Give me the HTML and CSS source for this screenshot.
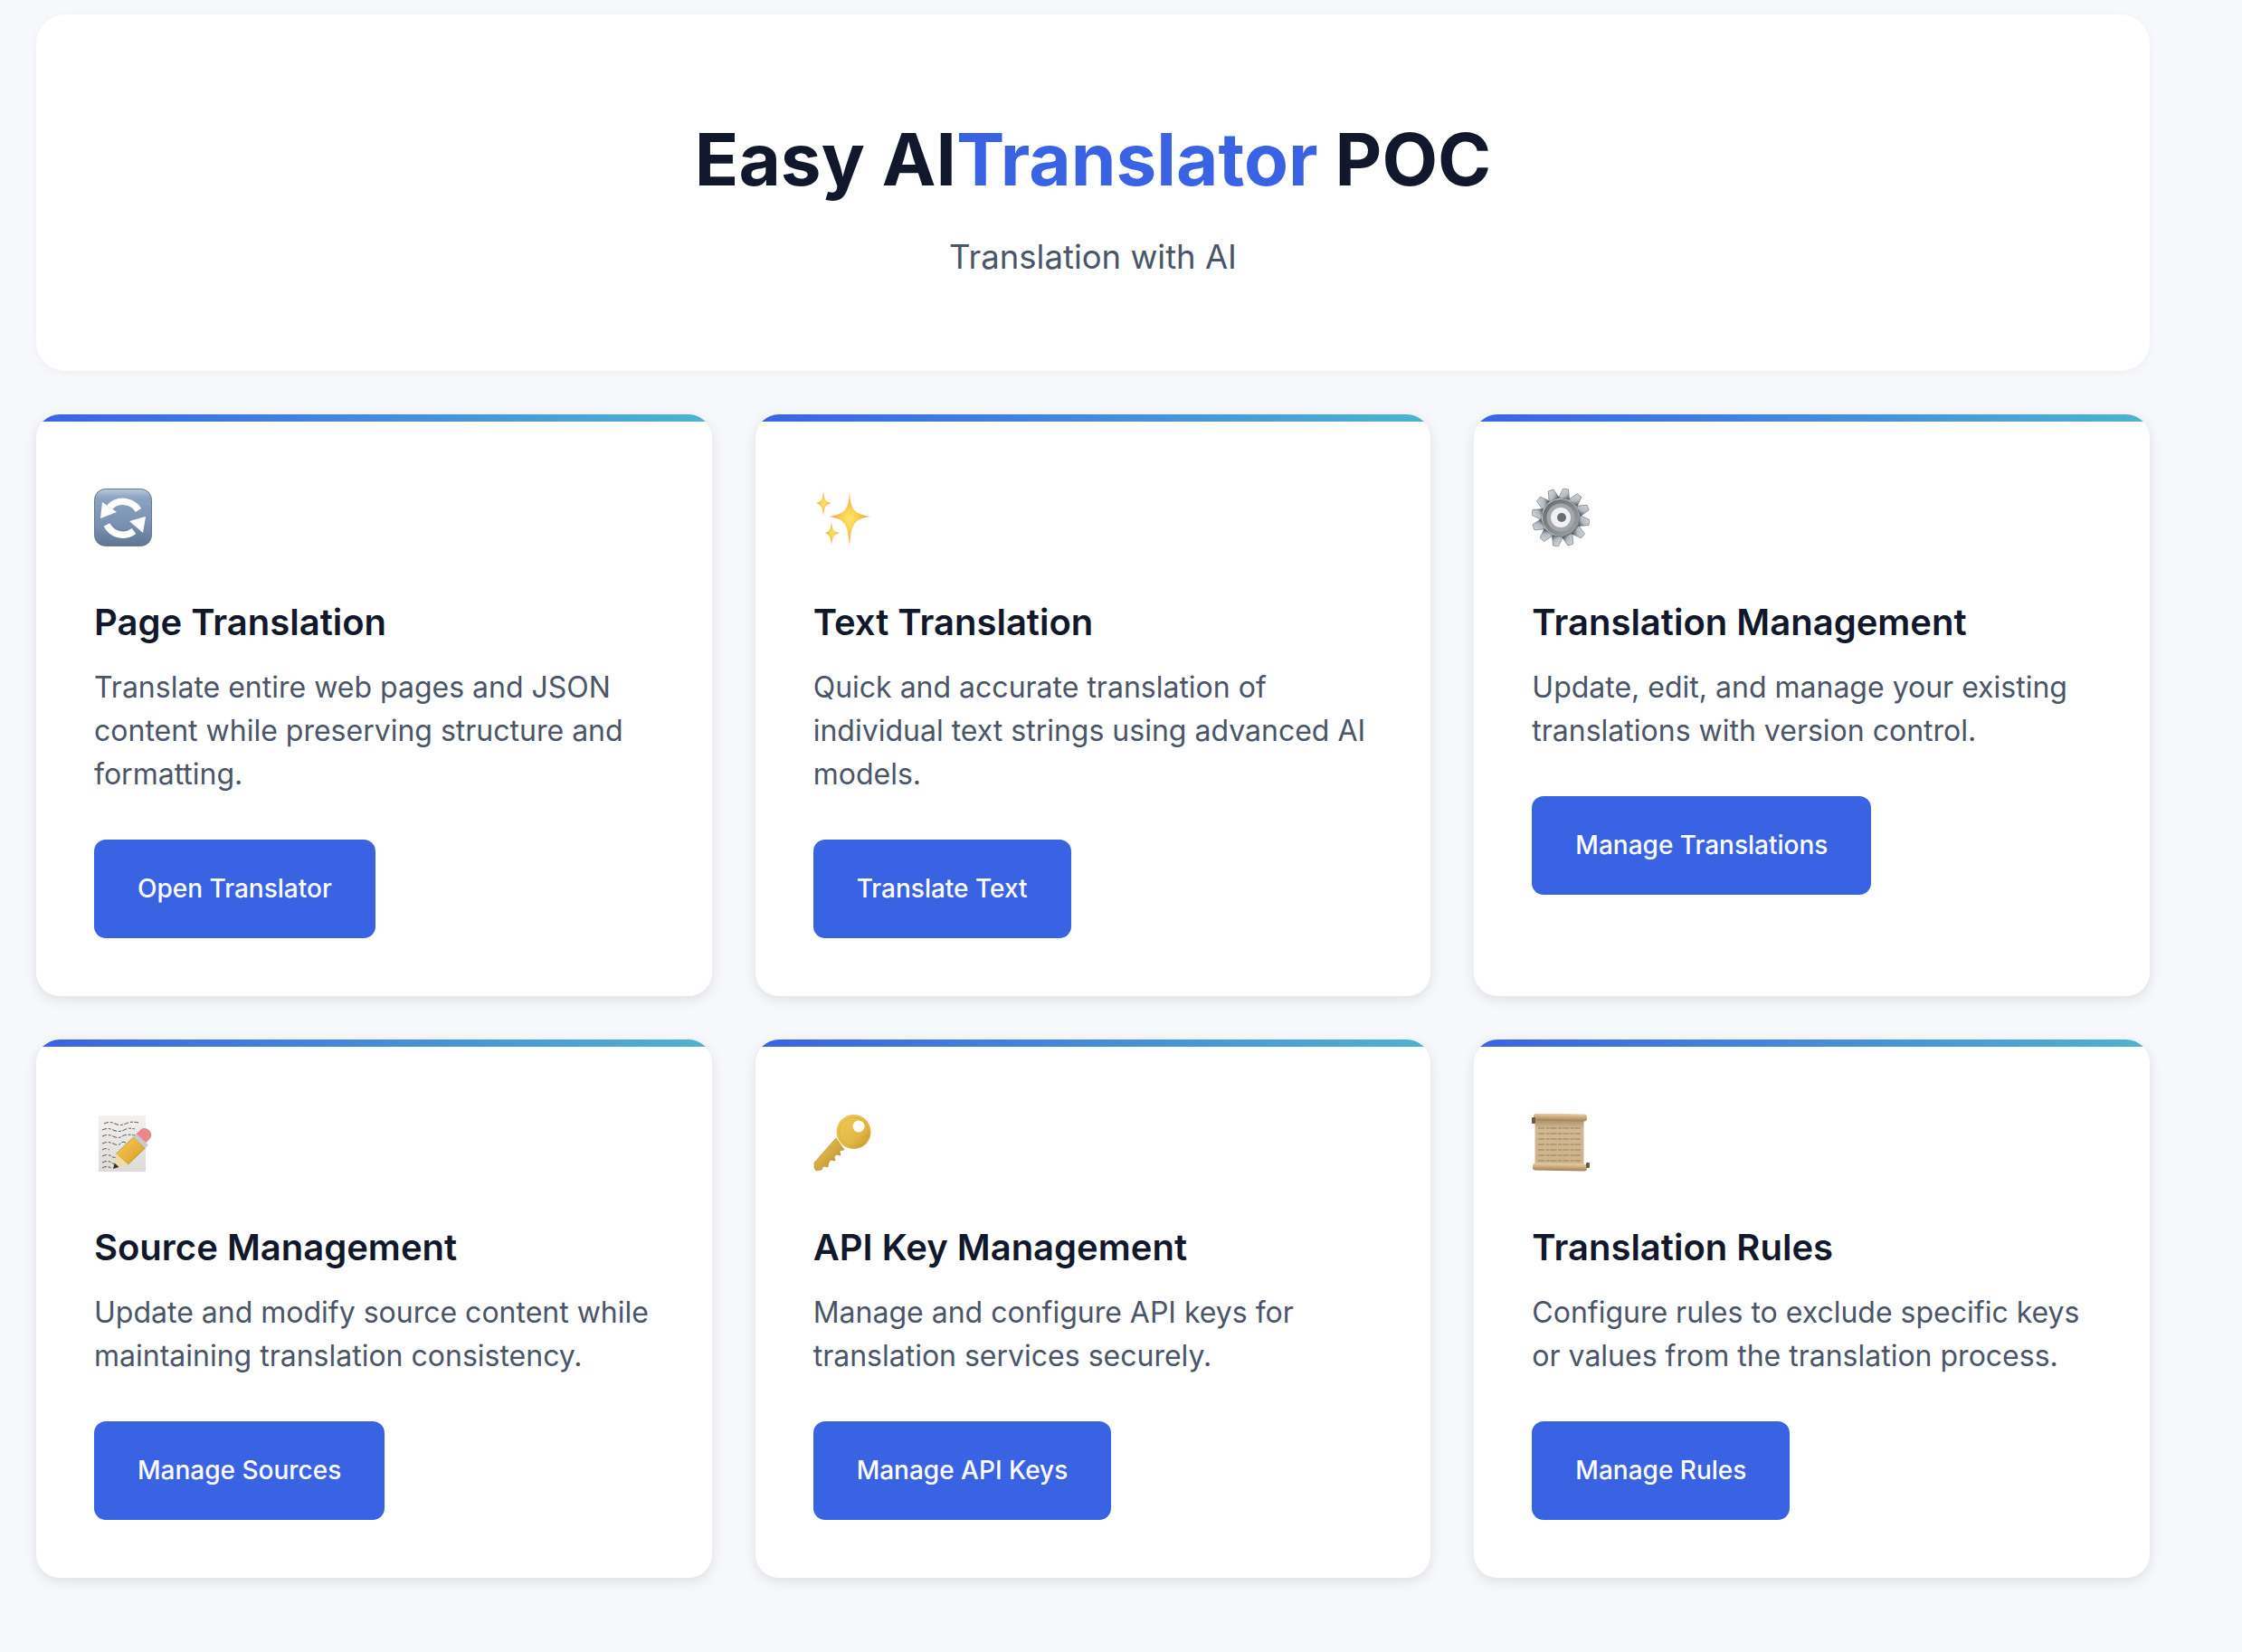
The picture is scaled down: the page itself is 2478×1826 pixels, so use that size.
FILE: index.html
```html
<!DOCTYPE html>
<html lang="en">
<head>
<meta charset="utf-8">
<title>Easy AITranslator POC</title>
<link rel="stylesheet" href="styles.css">
</head>
<body>
<svg class="defs" width="0" height="0" aria-hidden="true">
  <defs>
    <linearGradient id="gBlue" x1="0" y1="0" x2="0" y2="1"><stop offset="0" stop-color="#b9c9da"/><stop offset=".16" stop-color="#8aa3c1"/><stop offset=".65" stop-color="#7890ae"/><stop offset="1" stop-color="#5f7690"/></linearGradient>
    <radialGradient id="gStar" cx=".5" cy=".5" r=".5"><stop offset="0" stop-color="#fbe46e"/><stop offset=".35" stop-color="#f9d352"/><stop offset="1" stop-color="#ec983a"/></radialGradient>
    <linearGradient id="gGear" x1="0" y1="0" x2="1" y2="1"><stop offset="0" stop-color="#d6dde3"/><stop offset=".62" stop-color="#b2bac1"/><stop offset="1" stop-color="#45494e"/></linearGradient>
    <linearGradient id="gRing" x1="0" y1="0" x2="1" y2="1"><stop offset="0" stop-color="#63686d"/><stop offset="1" stop-color="#9fa4a8"/></linearGradient>
    <linearGradient id="gKey" x1="0" y1="0" x2="1" y2="1"><stop offset="0" stop-color="#f0cc58"/><stop offset=".6" stop-color="#e3b845"/><stop offset="1" stop-color="#c4962b"/></linearGradient>
    <linearGradient id="gShaft" x1="0" y1="0" x2="1" y2="1"><stop offset="0" stop-color="#eccb5c"/><stop offset="1" stop-color="#b98a24"/></linearGradient>
    <linearGradient id="gPaper" x1="0" y1="0" x2="0" y2="1"><stop offset="0" stop-color="#f2f1ee"/><stop offset="1" stop-color="#dcdbd7"/></linearGradient>
    <linearGradient id="gPencil" x1="0" y1="0" x2="1" y2="1"><stop offset="0" stop-color="#f6cf55"/><stop offset="1" stop-color="#d99a28"/></linearGradient>
    <linearGradient id="gRoll" x1="0" y1="0" x2="0" y2="1"><stop offset="0" stop-color="#e6cfa6"/><stop offset=".5" stop-color="#c9a97c"/><stop offset="1" stop-color="#a08058"/></linearGradient>
    <linearGradient id="gScroll" x1="0" y1="0" x2="0" y2="1"><stop offset="0" stop-color="#a98c68"/><stop offset=".2" stop-color="#d0b994"/><stop offset="1" stop-color="#cdb38b"/></linearGradient>
  </defs>
</svg>
<main class="page">
  <header class="hero">
    <h1 class="hero-title">Easy AI<span class="accent">Translator</span> POC</h1>
    <p class="hero-sub">Translation with AI</p>
  </header>
  <section class="grid">
    <article class="card">
      <svg class="icon" viewBox="0 0 64 64">
        <rect x="0.5" y="0.5" width="63" height="63" rx="12" fill="url(#gBlue)" stroke="#64788f"/>
        <path d="M17 21 A20 20 0 0 1 49 24" fill="none" stroke="#fff" stroke-width="7.5"/>
        <path d="M7 33 L9 15 L25 26 Z" fill="#fff"/>
        <path d="M14 40 A20 20 0 0 0 44 47" fill="none" stroke="#fff" stroke-width="7.5"/>
        <path d="M57 31 L54 49 L39 36 Z" fill="#fff"/>
      </svg>
      <h2 class="card-title">Page Translation</h2>
      <p class="card-text">Translate entire web pages and JSON content while preserving structure and formatting.</p>
      <a class="btn">Open Translator</a>
    </article>
    <article class="card">
      <svg class="icon" viewBox="0 0 64 64">
        <path d="M40 4 C41 22 44 28 63 31 C44 34 42 40 40 63 C38 40 36 34 17 31 C36 28 39 22 40 4 Z" fill="url(#gStar)"/>
        <path d="M11 3 C12 12 13 15 20 16 C13 18 12 21 11 30 C10 21 9 18 3 16 C9 15 10 12 11 3 Z" fill="url(#gStar)"/>
        <path d="M20 37 C21 45 22 48 29 49 C22 51 21 54 20 62 C19 54 18 51 13 49 C18 48 19 45 20 37 Z" fill="url(#gStar)"/>
      </svg>
      <h2 class="card-title">Text Translation</h2>
      <p class="card-text">Quick and accurate translation of individual text strings using advanced AI models.</p>
      <a class="btn">Translate Text</a>
    </article>
    <article class="card">
      <svg class="icon" viewBox="0 0 64 64">
        <g fill="url(#gGear)" stroke="#55595e" stroke-width=".5">
          <circle cx="32" cy="32" r="23"/>
          <path d="M29 0 L35 0 L38 11 L26 11 Z" transform="rotate(10 32 32)"/>
          <path d="M29 0 L35 0 L38 11 L26 11 Z" transform="rotate(40 32 32)"/>
          <path d="M29 0 L35 0 L38 11 L26 11 Z" transform="rotate(70 32 32)"/>
          <path d="M29 0 L35 0 L38 11 L26 11 Z" transform="rotate(100 32 32)"/>
          <path d="M29 0 L35 0 L38 11 L26 11 Z" transform="rotate(130 32 32)"/>
          <path d="M29 0 L35 0 L38 11 L26 11 Z" transform="rotate(160 32 32)"/>
          <path d="M29 0 L35 0 L38 11 L26 11 Z" transform="rotate(190 32 32)"/>
          <path d="M29 0 L35 0 L38 11 L26 11 Z" transform="rotate(220 32 32)"/>
          <path d="M29 0 L35 0 L38 11 L26 11 Z" transform="rotate(250 32 32)"/>
          <path d="M29 0 L35 0 L38 11 L26 11 Z" transform="rotate(280 32 32)"/>
          <path d="M29 0 L35 0 L38 11 L26 11 Z" transform="rotate(310 32 32)"/>
          <path d="M29 0 L35 0 L38 11 L26 11 Z" transform="rotate(340 32 32)"/>
        </g>
        <circle cx="32" cy="32" r="20" fill="url(#gRing)"/>
        <circle cx="32" cy="32" r="15.5" fill="#a3a7ab"/>
        <circle cx="32" cy="32" r="11" fill="#f0f1f3"/>
        <circle cx="33" cy="32" r="5" fill="#6a6e72"/>
      </svg>
      <h2 class="card-title">Translation Management</h2>
      <p class="card-text">Update, edit, and manage your existing translations with version control.</p>
      <a class="btn">Manage Translations</a>
    </article>
    <article class="card">
      <svg class="icon" viewBox="0 0 64 64">
        <rect x="5" y="2" width="52" height="62" fill="url(#gPaper)"/>
        <g fill="none" stroke="#55554f" stroke-width="1" stroke-dasharray="5 2 3 1.5">
          <path d="M11 11 q6 -3 12 0 t12 0 t14 -1"/>
          <path d="M9 18 q6 -3 12 0 t12 0 t12 -1"/>
          <path d="M9 25 q6 -3 12 0 t10 0 t14 -1"/>
          <path d="M9 33 q6 -3 12 0 t8 0 t6 -1"/>
          <path d="M9 40 q4 -3 8 0"/>
          <path d="M9 47 q6 -3 10 0 t8 0"/>
          <path d="M9 54 q6 -3 10 0 t6 0"/>
          <path d="M9 60 q4 -3 10 0"/>
        </g>
        <path d="M24.5 44 L43.5 26 L56.5 38 L37.5 56 Z" fill="url(#gPencil)" stroke="#a87a1e" stroke-width=".6"/>
        <path d="M24.5 44 L37.5 56 L21 61 Z" fill="#f3d9a8"/>
        <path d="M21 61 L22.6 54.5 L27.5 59 Z" fill="#333"/>
        <path d="M45 24 L51 18 C54 15 58 15.5 61 18.5 C64 21.5 64 25 61.5 28 L55 34 Z" fill="#e9888a"/>
        <path d="M43.5 26 L47 22.6 L60 34.6 L56.5 38 Z" fill="#c9c9c9"/>
      </svg>
      <h2 class="card-title">Source Management</h2>
      <p class="card-text">Update and modify source content while maintaining translation consistency.</p>
      <a class="btn">Manage Sources</a>
    </article>
    <article class="card">
      <svg class="icon" viewBox="0 0 64 64">
        <path d="M1 54 L25 27 L34 40 L29 41 L30 46 L25 45 L23 48 L24 52 L19 51 L17 54 L16 59 L11 58 L9 62 L3 63 L1 60 Z" fill="url(#gShaft)" stroke="#a97f25" stroke-width=".5"/>
        <circle cx="44.5" cy="20" r="19" fill="url(#gKey)"/>
        <circle cx="44.5" cy="20" r="16" fill="none" stroke="#c99f35" stroke-width=".8" opacity=".6"/>
        <circle cx="50" cy="14" r="6.5" fill="#fff"/>
      </svg>
      <h2 class="card-title">API Key Management</h2>
      <p class="card-text">Manage and configure API keys for translation services securely.</p>
      <a class="btn">Manage API Keys</a>
    </article>
    <article class="card">
      <svg class="icon" viewBox="0 0 64 64">
        <rect x="3.5" y="6" width="54" height="52" fill="url(#gScroll)"/>
        <g fill="none" stroke="#ae9169" stroke-width="1.3" stroke-dasharray="7 1.5 4 1">
          <path d="M7 16 H54"/><path d="M7 22 H54"/><path d="M7 28 H54"/><path d="M7 34 H54"/><path d="M7 40 H54"/><path d="M7 46 H54"/><path d="M7 52 H54"/>
        </g>
        <rect x="2" y="0" width="59" height="8" rx="3" fill="url(#gRoll)" transform="rotate(1 32 4)"/>
        <rect x="0" y="4" width="4" height="7" rx="1" fill="#6b5a45"/>
        <rect x="1" y="55" width="60" height="8" rx="3" fill="url(#gRoll)" transform="rotate(1 32 60)"/>
        <rect x="60" y="54" width="4" height="6" rx="1" fill="#6b5a45"/>
      </svg>
      <h2 class="card-title">Translation Rules</h2>
      <p class="card-text">Configure rules to exclude specific keys or values from the translation process.</p>
      <a class="btn">Manage Rules</a>
    </article>
  </section>
</main>
</body>
</html>
```

FILE: styles.css
```css
* { box-sizing: border-box; }
html, body { margin: 0; padding: 0; }
body {
  background: #f7f8fb;
  font-family: Inter, "Noto Sans", sans-serif;
  color: #12182b;
  min-height: 1826px;
}
.defs { display: block; height: 0; }
.page {
  width: 2336px;
  margin-left: 40px;
  padding-top: 16px;
}
.hero {
  height: 394px;
  background: #fff;
  border-radius: 32px;
  box-shadow: 0 2px 10px rgba(20, 30, 60, .04);
  padding-top: 112px;
  text-align: center;
  margin-bottom: 48px;
}
.hero-title {
  margin: 0;
  font-size: 80px;
  line-height: 96px;
  font-weight: 700;
  color: #12182b;
}
.accent { color: #3a63e4; }
.hero-sub {
  margin: 33px 0 0;
  font-size: 36.5px;
  line-height: 55px;
  color: #4a5568;
}
.grid {
  display: grid;
  grid-template-columns: repeat(3, 1fr);
  gap: 48px;
}
.card {
  position: relative;
  background: #fff;
  border-radius: 26px;
  overflow: hidden;
  padding: 82px 64px 64px;
  box-shadow: 0 4px 14px rgba(0, 0, 0, .1);
  display: flex;
  flex-direction: column;
  align-items: flex-start;
}
.card::before {
  content: "";
  position: absolute;
  left: 0;
  top: 0;
  width: 100%;
  height: 8px;
  background: linear-gradient(90deg, #3a63e4, #4fb3d0);
}
.icon {
  width: 64px;
  height: 64px;
  display: block;
  margin-bottom: 56px;
}
.card-title {
  margin: 0 0 20px;
  font-size: 40px;
  line-height: 56px;
  font-weight: 600;
  color: #12182b;
}
.card-text {
  margin: 0 0 48px;
  font-size: 32px;
  line-height: 48px;
  color: #4a5568;
}
.btn {
  display: inline-block;
  background: #3a63e4;
  color: #fff;
  padding: 0 48px;
  height: 109px;
  line-height: 109px;
  border-radius: 13px;
  font-size: 28px;
  font-weight: 500;
}
```
